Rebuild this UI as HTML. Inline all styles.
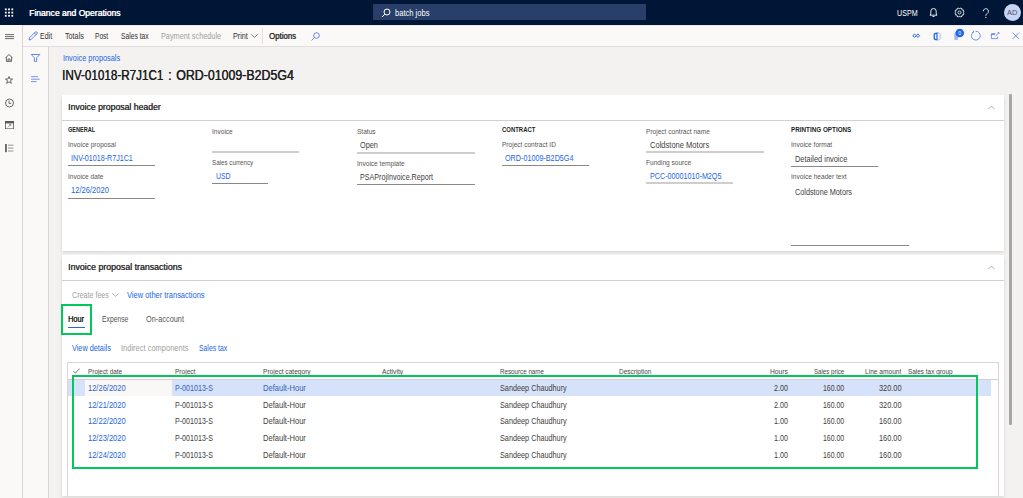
<!DOCTYPE html>
<html><head><meta charset="utf-8">
<style>
*{box-sizing:border-box;margin:0;padding:0}
html,body{width:1023px;height:498px;overflow:hidden;background:#f3f2f1;font-family:"Liberation Sans",sans-serif;color:#323130}
.a{position:absolute}
.t{position:absolute;white-space:nowrap;line-height:12px;height:12px;transform-origin:0 0}
#top{left:0;top:0;width:1023px;height:25px;background:#001636}
#tb{left:23px;top:25px;width:1000px;height:22px;background:#faf9f8;border-bottom:1px solid #e1dfdd}
#rail{left:0;top:25px;width:23px;height:473px;background:#faf9f8;border-right:1px solid #d8d6d4}
#rail2{left:23px;top:47px;width:26px;height:451px;background:#faf9f8;border-right:1px solid #d8d6d4}
.card{position:absolute;background:#fff;box-shadow:0 1.6px 3.6px rgba(0,0,0,.12),0 0.3px 0.9px rgba(0,0,0,.1)}
.hl{position:absolute;height:1px;background:#c8c6c4}
.ul{position:absolute;height:1px;background:#8a8886}
.ic{position:absolute}
</style></head><body>
<!-- top bar -->
<div id="top" class="a">
  <svg class="a" style="left:4px;top:8px" width="10" height="10" viewBox="0 0 10 10" fill="#fff"><rect x="0.90" y="0.45" width="1.8" height="1.8"/><rect x="4.10" y="0.45" width="1.8" height="1.8"/><rect x="7.40" y="0.45" width="1.8" height="1.8"/><rect x="0.90" y="3.70" width="1.8" height="1.8"/><rect x="4.10" y="3.70" width="1.8" height="1.8"/><rect x="7.40" y="3.70" width="1.8" height="1.8"/><rect x="0.90" y="6.90" width="1.8" height="1.8"/><rect x="4.10" y="6.90" width="1.8" height="1.8"/><rect x="7.40" y="6.90" width="1.8" height="1.8"/></svg>
  <div class="a" style="left:373px;top:4px;width:273px;height:16px;background:#283f69;border-radius:1px"></div>
  <svg class="a" style="left:381px;top:8px" width="10" height="10" viewBox="0 0 10 10" fill="none" stroke="#fff" stroke-width="1">
    <circle cx="6" cy="4" r="3"/><line x1="3.8" y1="6.2" x2="1" y2="9"/>
  </svg>
  <svg class="a" style="left:929px;top:7px" width="9" height="11" viewBox="0 0 9 11" fill="none" stroke="#fff" stroke-width="0.9">
    <path d="M1 8.2 L1.8 7 V4.2 A2.7 2.7 0 0 1 7.2 4.2 V7 L8 8.2 Z"/><path d="M3.5 9.5 H5.5"/>
  </svg>
  <svg class="a" style="left:954px;top:6.8px" width="11" height="11" viewBox="0 0 11 11" fill="none" stroke="#fff" stroke-width="0.8" stroke-linejoin="round"><path d="M9.00 5.61 L10.01 6.38 L9.32 8.07 L8.05 7.89 L7.89 8.05 L8.07 9.32 L6.38 10.01 L5.61 9.00 L5.39 9.00 L4.62 10.01 L2.93 9.32 L3.11 8.05 L2.95 7.89 L1.68 8.07 L0.99 6.38 L2.00 5.61 L2.00 5.39 L0.99 4.62 L1.68 2.93 L2.95 3.11 L3.11 2.95 L2.93 1.68 L4.62 0.99 L5.39 2.00 L5.61 2.00 L6.38 0.99 L8.07 1.68 L7.89 2.95 L8.05 3.11 L9.32 2.93 L10.01 4.62 L9.00 5.39 Z"/><circle cx="5.5" cy="5.5" r="1.5"/></svg>
  <svg class="a" style="left:982px;top:7.6px" width="8" height="11" viewBox="0 0 8 11" fill="none" stroke="#fff" stroke-width="0.85"><path d="M1.3 3.3 A2.6 2.6 0 1 1 5.4 5.4 C4.2 6.1 3.9 6.6 3.9 7.8"/><circle cx="3.9" cy="9.4" r="0.55" fill="#fff" stroke="none"/></svg>
  <div class="a" style="left:1003.6px;top:3.6px;width:17.4px;height:17.4px;border-radius:50%;background:#c6d4f3"></div>
</div>
<div id="rail" class="a"></div>
<div id="tb" class="a"></div>
<div id="rail2" class="a"></div>
<div class="a" style="left:23px;top:25px;width:1000px;height:1px;background:#ecebea"></div>
<!-- rail icons -->
<svg class="ic" style="left:5px;top:34px" width="9" height="6" viewBox="0 0 9 6" stroke="#484644" stroke-width="0.8"><path d="M0 0.6h9M0 2.6h9M0 4.6h9"/></svg>
<svg class="ic" style="left:5px;top:54px" width="8" height="8" viewBox="0 0 8 8" fill="none" stroke="#484644" stroke-width="0.8"><path d="M0.6 3.6 L4 0.6 L7.4 3.6 M1.4 3 V7.4 H6.6 V3 M3 7.4 V5 H5 V7.4"/></svg>
<svg class="ic" style="left:5px;top:76px" width="8" height="8" viewBox="0 0 8 8" fill="none" stroke="#484644" stroke-width="0.8"><path d="M4 0.5 L5 3 L7.6 3.1 L5.5 4.7 L6.3 7.4 L4 5.8 L1.7 7.4 L2.5 4.7 L0.4 3.1 L3 3 Z"/></svg>
<svg class="ic" style="left:5px;top:98px" width="9" height="10" viewBox="0 0 9 10" fill="none" stroke="#484644" stroke-width="0.8"><circle cx="4.5" cy="5" r="4"/><path d="M4 2.6 V5.4 H6.2"/></svg>
<svg class="ic" style="left:5px;top:121px" width="9" height="8" viewBox="0 0 9 8" fill="none" stroke="#5a5856" stroke-width="0.8"><rect x="0.4" y="0.4" width="8.2" height="7.4"/><rect x="0.4" y="0.4" width="8.2" height="1.6" fill="#5a5856"/><path d="M2.8 6.4 L5.8 3.4" stroke="#7a6fb0" stroke-width="0.7"/><path d="M4.2 3.4 H5.8 V5" stroke-width="0.6"/></svg>
<svg class="ic" style="left:5px;top:143.6px" width="9" height="9" viewBox="0 0 9 9"><rect x="0" y="0" width="1.9" height="8.2" fill="#6d6b69"/><path d="M3 1.2 H8.4 M3 4.1 H8.4 M3 7 H8.4" stroke="#8a8886" stroke-width="0.9"/></svg>
<!-- rail2 icons -->
<svg class="ic" style="left:30px;top:53px" width="11" height="10" viewBox="0 0 11 10" fill="none" stroke="#4f7be8" stroke-width="0.9"><path d="M1.2 1.5 H9.8 L6.6 4.8 V8.4 H4.4 V4.8 Z"/></svg>
<svg class="ic" style="left:31px;top:76px" width="10" height="7" viewBox="0 0 10 7" stroke="#4f7be8" stroke-width="0.8"><path d="M0 0.7h7M0 3.2h8.7M0 5.6h5.5"/></svg>
<!-- toolbar icons -->
<svg class="ic" style="left:28.3px;top:30.8px" width="10" height="10" viewBox="0 0 10 10" fill="none" stroke="#4f7be8" stroke-width="0.9"><path d="M1 9 L1.5 6.8 L7.2 1.1 A1 1 0 0 1 8.9 2.8 L3.2 8.5 Z M6.4 1.9 L8.1 3.6"/></svg>
<svg class="ic" style="left:251px;top:34px" width="7" height="4" viewBox="0 0 7 4" fill="none" stroke="#605e5c" stroke-width="0.8"><path d="M0.3 0.4 L3.5 3.4 L6.7 0.4"/></svg>
<div class="a" style="left:262px;top:28px;width:1px;height:16px;background:#e1dfdd"></div>
<svg class="ic" style="left:311px;top:32px" width="9" height="9" viewBox="0 0 9 9" fill="none" stroke="#4f7be8" stroke-width="0.9"><circle cx="5.5" cy="3.5" r="2.8"/><path d="M3.5 5.5 L0.6 8.4"/></svg>
<svg class="ic" style="left:912px;top:33px" width="9" height="6" viewBox="0 0 9 6" fill="none" stroke="#2266e3" stroke-width="1"><path d="M0.8 2.7 L2.5 1 L4.2 2.7 L2.5 4.4 Z M4.2 2.7 L5.9 1 L7.6 2.7 L5.9 4.4 Z"/></svg>
<svg class="ic" style="left:932.5px;top:31.8px" width="8" height="9" viewBox="0 0 8 9"><path d="M0.6 2.2 Q0.6 1.2 1.6 0.9 L4.6 0.2 V8.6 L1.6 7.9 Q0.6 7.6 0.6 6.6 Z M1.9 2.4 V6.4 L3.4 6.9 V1.9 Z" fill="#2266e3" fill-rule="evenodd"/><path d="M4.6 0.6 L6.4 1.2 Q7.2 1.5 7.2 2.4 V6.4 Q7.2 7.3 6.4 7.6 L4.6 8.2" fill="none" stroke="#a8bdf0" stroke-width="1"/></svg>
<svg class="ic" style="left:953px;top:28px" width="13" height="13" viewBox="0 0 13 13"><rect x="1.3" y="4.5" width="3.8" height="7.5" rx="1.2" fill="#a3baf0"/><circle cx="6.8" cy="5" r="4.3" fill="#2266e3"/><text x="6.8" y="6.9" font-size="5.2" fill="#fff" text-anchor="middle" font-family="Liberation Sans">0</text></svg>
<svg class="ic" style="left:970px;top:30px" width="11" height="11" viewBox="0 0 11 11" fill="none" stroke="#4f7be8" stroke-width="0.8"><path d="M3.6 1.9 A4.4 4.4 0 1 0 5.6 1.3"/><path d="M3.2 0.6 L3.7 2.1 L2.2 2.6" stroke-width="0.8"/></svg>
<svg class="ic" style="left:990px;top:32px" width="10" height="8" viewBox="0 0 10 8" fill="none" stroke="#4f7be8" stroke-width="0.8"><path d="M5.5 1.8 H1.4 V6.6 H7.6 V4.8"/><path d="M1.4 2.3 H5" stroke-width="1"/><path d="M5.5 4 L8.6 1" /><path d="M7.6 0.6 H9 V2" /></svg>
<svg class="ic" style="left:1011.5px;top:32px" width="8" height="8" viewBox="0 0 8 8" fill="none" stroke="#4f7be8" stroke-width="0.8"><path d="M0.6 0.6 L7 7 M7 0.6 L0.6 7"/></svg>

<!-- card 1 -->
<div class="card" style="left:62px;top:94.5px;width:942px;height:156.5px"></div>
<svg class="ic" style="left:988.4px;top:104.6px" width="7" height="5" viewBox="0 0 7 5" fill="none" stroke="#9b9997" stroke-width="0.8"><path d="M0.4 4 L3.4 1 L6.4 4"/></svg>
<div class="hl" style="left:62px;top:120px;width:942px;background:#d2d0ce"></div>
<div class="ul" style="left:68px;top:165px;width:87px"></div>
<div class="ul" style="left:68px;top:198px;width:87px"></div>
<div class="ul" style="left:212.3px;top:151px;width:87px;background:#d0cecc;height:2px"></div>
<div class="ul" style="left:212.3px;top:183px;width:56px"></div>
<div class="ul" style="left:356.8px;top:152px;width:118px;background:#d0cecc;height:2px"></div>
<div class="ul" style="left:356.8px;top:184px;width:118px"></div>
<div class="ul" style="left:501.6px;top:165px;width:87px"></div>
<div class="ul" style="left:646.4px;top:151px;width:118px;background:#d0cecc;height:2px"></div>
<div class="ul" style="left:646.4px;top:182px;width:87px;background:#d0cecc;height:2px"></div>
<div class="ul" style="left:791px;top:166px;width:87px"></div>
<div class="ul" style="left:791px;top:245px;width:118px"></div>

<!-- card 2 -->
<div class="card" style="left:62px;top:255px;width:942px;height:241px"></div>
<svg class="ic" style="left:988.4px;top:265.4px" width="7" height="5" viewBox="0 0 7 5" fill="none" stroke="#9b9997" stroke-width="0.8"><path d="M0.4 4 L3.4 1 L6.4 4"/></svg>
<div class="hl" style="left:62px;top:280px;width:942px;background:#d2d0ce"></div>
<svg class="ic" style="left:111.5px;top:293px" width="7" height="4" viewBox="0 0 7 4" fill="none" stroke="#a19f9d" stroke-width="0.8"><path d="M0.3 0.4 L3.5 3.4 L6.7 0.4"/></svg>
<div class="a" style="left:68px;top:327px;width:17px;height:1.2px;background:#2266e3"></div>
<div class="a" style="left:61px;top:304px;width:31px;height:31px;border:2px solid #03c75e"></div>

<!-- grid -->
<div class="a" style="left:67px;top:362px;width:932px;height:134px;border:1px solid #d8d6d4;border-bottom:none"></div>
<svg class="ic" style="left:72.5px;top:368px" width="7" height="6" viewBox="0 0 7 6" fill="none" stroke="#484644" stroke-width="0.7"><path d="M0.4 3 L2.4 5.2 L6.6 0.5"/></svg>
<div class="hl" style="left:68px;top:379px;width:930px;background:#d4d2d0"></div>
<div class="a" style="left:68px;top:380px;width:923px;height:16px;background:#d6e2f9"></div>
<div class="a" style="left:85px;top:380px;width:87px;height:16px;background:#f9f8f7"></div>
<div class="t" style="left:28.70px;top:7px;font-size:8.8px;font-weight:400;color:#fff;transform:scaleX(0.9713);text-shadow:0.5px 0 0 #fff;">Finance and Operations</div>
<div class="t" style="left:394.80px;top:8px;font-size:8.2px;font-weight:400;color:#fff;transform:scaleX(0.9243);">batch jobs</div>
<div class="t" style="left:897.00px;top:8px;font-size:8.2px;font-weight:400;color:#fff;transform:scaleX(0.8696);">USPM</div>
<div class="t" style="left:1007.10px;top:7px;font-size:6.6px;font-weight:400;color:#4a4f63;transform:scaleX(1.1222);">AD</div>
<div class="t" style="left:40.00px;top:31px;font-size:8.2px;font-weight:400;color:#323130;transform:scaleX(0.8571);">Edit</div>
<div class="t" style="left:64.50px;top:31px;font-size:8.2px;font-weight:400;color:#323130;transform:scaleX(0.8810);">Totals</div>
<div class="t" style="left:95.00px;top:31px;font-size:8.2px;font-weight:400;color:#323130;transform:scaleX(0.8059);">Post</div>
<div class="t" style="left:121.00px;top:31px;font-size:8.2px;font-weight:400;color:#323130;transform:scaleX(0.8235);">Sales tax</div>
<div class="t" style="left:161.00px;top:31px;font-size:8.2px;font-weight:400;color:#a19f9d;transform:scaleX(0.8925);">Payment schedule</div>
<div class="t" style="left:232.70px;top:31px;font-size:8.2px;font-weight:400;color:#323130;transform:scaleX(0.8824);">Print</div>
<div class="t" style="left:268.90px;top:31px;font-size:8.2px;font-weight:400;color:#323130;transform:scaleX(0.9536);text-shadow:0.35px 0 0 #323130;">Options</div>
<div class="t" style="left:62.80px;top:53px;font-size:8.2px;font-weight:400;color:#2266e3;transform:scaleX(0.8969);">Invoice proposals</div>
<div class="t" style="left:61.97px;top:69px;font-size:14.1px;font-weight:400;color:#201f1e;transform:scaleX(0.8281);text-shadow:0.45px 0 0 #201f1e;">INV-01018-R7J1C1</div>
<div class="t" style="left:168.05px;top:69px;font-size:14.1px;font-weight:400;color:#201f1e;transform:scaleX(0.8532);text-shadow:0.45px 0 0 #201f1e;">:</div>
<div class="t" style="left:175.70px;top:69px;font-size:14.1px;font-weight:400;color:#201f1e;transform:scaleX(0.8784);text-shadow:0.45px 0 0 #201f1e;">ORD-01009-B2D5G4</div>
<div class="t" style="left:67.70px;top:101px;font-size:8.6px;font-weight:400;color:#323130;transform:scaleX(1.0098);text-shadow:0.35px 0 0 #323130;">Invoice proposal header</div>
<div class="t" style="left:68.00px;top:124px;font-size:6.7px;font-weight:700;color:#201f1e;transform:scaleX(0.8333);">GENERAL</div>
<div class="t" style="left:68.00px;top:139px;font-size:6.5px;font-weight:400;color:#575553;transform:scaleX(1.0106);">Invoice proposal</div>
<div class="t" style="left:70.90px;top:153px;font-size:8.2px;font-weight:400;color:#2266e3;transform:scaleX(0.8704);">INV-01018-R7J1C1</div>
<div class="t" style="left:68.00px;top:171px;font-size:6.5px;font-weight:400;color:#575553;transform:scaleX(1.0085);">Invoice date</div>
<div class="t" style="left:71.00px;top:185px;font-size:8.2px;font-weight:400;color:#2266e3;transform:scaleX(0.9268);">12/26/2020</div>
<div class="t" style="left:212.30px;top:126px;font-size:6.5px;font-weight:400;color:#575553;transform:scaleX(1.0085);">Invoice</div>
<div class="t" style="left:212.30px;top:157px;font-size:6.5px;font-weight:400;color:#575553;transform:scaleX(0.9581);">Sales currency</div>
<div class="t" style="left:215.70px;top:171px;font-size:8.2px;font-weight:400;color:#2266e3;transform:scaleX(0.8412);">USD</div>
<div class="t" style="left:356.80px;top:126px;font-size:6.5px;font-weight:400;color:#575553;transform:scaleX(1.0085);">Status</div>
<div class="t" style="left:360.30px;top:140px;font-size:8.2px;font-weight:400;color:#42403e;transform:scaleX(0.8880);">Open</div>
<div class="t" style="left:356.80px;top:158px;font-size:6.5px;font-weight:400;color:#575553;transform:scaleX(1.0085);">Invoice template</div>
<div class="t" style="left:360.30px;top:172px;font-size:8.2px;font-weight:400;color:#42403e;transform:scaleX(0.8726);">PSAProjInvoice.Report</div>
<div class="t" style="left:501.80px;top:124px;font-size:6.7px;font-weight:700;color:#201f1e;transform:scaleX(0.8895);">CONTRACT</div>
<div class="t" style="left:501.60px;top:139px;font-size:6.5px;font-weight:400;color:#575553;transform:scaleX(1.0074);">Project contract ID</div>
<div class="t" style="left:505.00px;top:153px;font-size:8.2px;font-weight:400;color:#2266e3;transform:scaleX(0.8795);">ORD-01009-B2D5G4</div>
<div class="t" style="left:646.40px;top:126px;font-size:6.5px;font-weight:400;color:#575553;transform:scaleX(1.0095);">Project contract name</div>
<div class="t" style="left:649.60px;top:140px;font-size:8.2px;font-weight:400;color:#42403e;transform:scaleX(0.9219);">Coldstone Motors</div>
<div class="t" style="left:646.40px;top:157px;font-size:6.5px;font-weight:400;color:#575553;transform:scaleX(1.0085);">Funding source</div>
<div class="t" style="left:649.60px;top:171px;font-size:8.2px;font-weight:400;color:#2266e3;transform:scaleX(0.8768);">PCC-00001010-M2Q5</div>
<div class="t" style="left:791.00px;top:124px;font-size:6.7px;font-weight:700;color:#201f1e;transform:scaleX(0.9437);">PRINTING OPTIONS</div>
<div class="t" style="left:791.00px;top:139px;font-size:6.5px;font-weight:400;color:#575553;transform:scaleX(1.0085);">Invoice format</div>
<div class="t" style="left:794.50px;top:154px;font-size:8.2px;font-weight:400;color:#42403e;transform:scaleX(0.9052);">Detailed invoice</div>
<div class="t" style="left:791.00px;top:171px;font-size:6.5px;font-weight:400;color:#575553;transform:scaleX(1.0127);">Invoice header text</div>
<div class="t" style="left:794.50px;top:187px;font-size:8.2px;font-weight:400;color:#42403e;transform:scaleX(0.8880);">Coldstone Motors</div>
<div class="t" style="left:67.50px;top:261px;font-size:8.6px;font-weight:400;color:#323130;transform:scaleX(1.0225);text-shadow:0.35px 0 0 #323130;">Invoice proposal transactions</div>
<div class="t" style="left:71.90px;top:290px;font-size:8.2px;font-weight:400;color:#a19f9d;transform:scaleX(0.8714);">Create fees</div>
<div class="t" style="left:126.80px;top:290px;font-size:8.2px;font-weight:400;color:#2266e3;transform:scaleX(0.9129);">View other transactions</div>
<div class="t" style="left:68.30px;top:314px;font-size:8.2px;font-weight:400;color:#201f1e;transform:scaleX(0.8944);text-shadow:0.35px 0 0 #201f1e;">Hour</div>
<div class="t" style="left:102.00px;top:314px;font-size:8.2px;font-weight:400;color:#575553;transform:scaleX(0.8281);">Expense</div>
<div class="t" style="left:146.00px;top:314px;font-size:8.2px;font-weight:400;color:#575553;transform:scaleX(0.8977);">On-account</div>
<div class="t" style="left:71.90px;top:343px;font-size:8.2px;font-weight:400;color:#2266e3;transform:scaleX(0.8909);">View details</div>
<div class="t" style="left:120.50px;top:343px;font-size:8.2px;font-weight:400;color:#a19f9d;transform:scaleX(0.9162);">Indirect components</div>
<div class="t" style="left:198.90px;top:343px;font-size:8.2px;font-weight:400;color:#2266e3;transform:scaleX(0.8353);">Sales tax</div>
<div class="t" style="left:87.80px;top:366px;font-size:6.5px;font-weight:400;color:#484644;transform:scaleX(0.9829);">Project date</div>
<div class="t" style="left:175.30px;top:366px;font-size:6.5px;font-weight:400;color:#484644;transform:scaleX(1.0085);">Project</div>
<div class="t" style="left:263.30px;top:366px;font-size:6.5px;font-weight:400;color:#484644;transform:scaleX(1.0149);">Project category</div>
<div class="t" style="left:382.00px;top:366px;font-size:6.5px;font-weight:400;color:#484644;transform:scaleX(1.0238);">Activity</div>
<div class="t" style="left:500.00px;top:366px;font-size:6.5px;font-weight:400;color:#484644;transform:scaleX(0.9587);">Resource name</div>
<div class="t" style="left:618.80px;top:366px;font-size:6.5px;font-weight:400;color:#484644;transform:scaleX(0.9970);">Description</div>
<div class="t" style="left:770.30px;top:366px;font-size:6.5px;font-weight:400;color:#484644;transform:scaleX(1.0353);">Hours</div>
<div class="t" style="left:814.00px;top:366px;font-size:6.5px;font-weight:400;color:#484644;transform:scaleX(0.9406);">Sales price</div>
<div class="t" style="left:864.90px;top:366px;font-size:6.5px;font-weight:400;color:#484644;transform:scaleX(1.0167);">Line amount</div>
<div class="t" style="left:907.60px;top:366px;font-size:6.5px;font-weight:400;color:#484644;transform:scaleX(0.9867);">Sales tax group</div>
<div class="t" style="left:87.80px;top:383px;font-size:8.2px;font-weight:400;color:#2a5fd0;transform:scaleX(0.9195);">12/26/2020</div>
<div class="t" style="left:175.30px;top:383px;font-size:8.2px;font-weight:400;color:#3560bd;transform:scaleX(0.8682);">P-001013-S</div>
<div class="t" style="left:263.30px;top:383px;font-size:8.2px;font-weight:400;color:#3560bd;transform:scaleX(0.9234);">Default-Hour</div>
<div class="t" style="left:500.00px;top:383px;font-size:8.2px;font-weight:400;color:#42403e;transform:scaleX(0.8880);">Sandeep Chaudhury</div>
<div class="t" style="left:774.00px;top:383px;font-size:8.2px;font-weight:400;color:#42403e;transform:scaleX(0.8750);">2.00</div>
<div class="t" style="left:822.80px;top:383px;font-size:8.2px;font-weight:400;color:#42403e;transform:scaleX(0.8480);">160.00</div>
<div class="t" style="left:879.00px;top:383px;font-size:8.2px;font-weight:400;color:#42403e;transform:scaleX(0.9000);">320.00</div>
<div class="t" style="left:87.80px;top:400px;font-size:8.2px;font-weight:400;color:#2266e3;transform:scaleX(0.9195);">12/21/2020</div>
<div class="t" style="left:175.30px;top:400px;font-size:8.2px;font-weight:400;color:#42403e;transform:scaleX(0.8682);">P-001013-S</div>
<div class="t" style="left:263.30px;top:400px;font-size:8.2px;font-weight:400;color:#42403e;transform:scaleX(0.9234);">Default-Hour</div>
<div class="t" style="left:500.00px;top:400px;font-size:8.2px;font-weight:400;color:#42403e;transform:scaleX(0.8880);">Sandeep Chaudhury</div>
<div class="t" style="left:774.00px;top:400px;font-size:8.2px;font-weight:400;color:#42403e;transform:scaleX(0.8750);">2.00</div>
<div class="t" style="left:822.80px;top:400px;font-size:8.2px;font-weight:400;color:#42403e;transform:scaleX(0.8480);">160.00</div>
<div class="t" style="left:879.00px;top:400px;font-size:8.2px;font-weight:400;color:#42403e;transform:scaleX(0.9000);">320.00</div>
<div class="t" style="left:87.80px;top:416px;font-size:8.2px;font-weight:400;color:#2266e3;transform:scaleX(0.9195);">12/22/2020</div>
<div class="t" style="left:175.30px;top:416px;font-size:8.2px;font-weight:400;color:#42403e;transform:scaleX(0.8682);">P-001013-S</div>
<div class="t" style="left:263.30px;top:416px;font-size:8.2px;font-weight:400;color:#42403e;transform:scaleX(0.9234);">Default-Hour</div>
<div class="t" style="left:500.00px;top:416px;font-size:8.2px;font-weight:400;color:#42403e;transform:scaleX(0.8880);">Sandeep Chaudhury</div>
<div class="t" style="left:774.00px;top:416px;font-size:8.2px;font-weight:400;color:#42403e;transform:scaleX(0.8750);">1.00</div>
<div class="t" style="left:822.80px;top:416px;font-size:8.2px;font-weight:400;color:#42403e;transform:scaleX(0.8480);">160.00</div>
<div class="t" style="left:879.00px;top:416px;font-size:8.2px;font-weight:400;color:#42403e;transform:scaleX(0.9000);">160.00</div>
<div class="t" style="left:87.80px;top:433px;font-size:8.2px;font-weight:400;color:#2266e3;transform:scaleX(0.9195);">12/23/2020</div>
<div class="t" style="left:175.30px;top:433px;font-size:8.2px;font-weight:400;color:#42403e;transform:scaleX(0.8682);">P-001013-S</div>
<div class="t" style="left:263.30px;top:433px;font-size:8.2px;font-weight:400;color:#42403e;transform:scaleX(0.9234);">Default-Hour</div>
<div class="t" style="left:500.00px;top:433px;font-size:8.2px;font-weight:400;color:#42403e;transform:scaleX(0.8880);">Sandeep Chaudhury</div>
<div class="t" style="left:774.00px;top:433px;font-size:8.2px;font-weight:400;color:#42403e;transform:scaleX(0.8750);">1.00</div>
<div class="t" style="left:822.80px;top:433px;font-size:8.2px;font-weight:400;color:#42403e;transform:scaleX(0.8480);">160.00</div>
<div class="t" style="left:879.00px;top:433px;font-size:8.2px;font-weight:400;color:#42403e;transform:scaleX(0.9000);">160.00</div>
<div class="t" style="left:87.80px;top:450px;font-size:8.2px;font-weight:400;color:#2266e3;transform:scaleX(0.9195);">12/24/2020</div>
<div class="t" style="left:175.30px;top:450px;font-size:8.2px;font-weight:400;color:#42403e;transform:scaleX(0.8682);">P-001013-S</div>
<div class="t" style="left:263.30px;top:450px;font-size:8.2px;font-weight:400;color:#42403e;transform:scaleX(0.9234);">Default-Hour</div>
<div class="t" style="left:500.00px;top:450px;font-size:8.2px;font-weight:400;color:#42403e;transform:scaleX(0.8880);">Sandeep Chaudhury</div>
<div class="t" style="left:774.00px;top:450px;font-size:8.2px;font-weight:400;color:#42403e;transform:scaleX(0.8750);">1.00</div>
<div class="t" style="left:822.80px;top:450px;font-size:8.2px;font-weight:400;color:#42403e;transform:scaleX(0.8480);">160.00</div>
<div class="t" style="left:879.00px;top:450px;font-size:8.2px;font-weight:400;color:#42403e;transform:scaleX(0.9000);">160.00</div>
<div class="a" style="left:72px;top:375px;width:906px;height:94px;border:2px solid #03c75e"></div>
<div class="a" style="left:1009px;top:94px;width:3px;height:331px;background:#a6a6a6;border-radius:1px"></div>

</body></html>
